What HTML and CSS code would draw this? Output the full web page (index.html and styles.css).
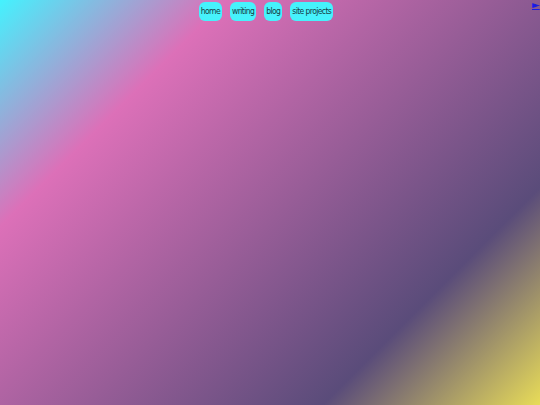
FILE: index.html
```html
<!DOCTYPE html>
<html>
<head>
<meta charset="utf-8">
<link rel="stylesheet" href="styles.css">
</head>
<body>
<div class="top">
  <nav class="nav">
    <a class="btn" href="#">home</a>
    <a class="btn" href="#">writing</a>
    <a class="btn" href="#">blog</a>
    <a class="btn" href="#">site projects</a>
  </nav>
  <a class="toggle" href="#">►</a>
</div>
</body>
</html>
```
FILE: styles.css
```css
html, body {
  margin: 0;
  height: 100%;
}
body {
  background: linear-gradient(135deg, #44f2fe 0%, #dc70b8 24%, #5a4c7a 77%, #e8dc58 100%);
  font-family: "DejaVu Sans Condensed", sans-serif;
}
.top {
  display: flex;
  align-items: flex-start;
}
.nav {
  flex: 1;
  display: flex;
  justify-content: center;
  gap: 8px;
  padding-top: 2px;
}
.btn {
  display: block;
  background: #46f2fc;
  color: #183c44;
  text-decoration: none;
  font-size: 8.5px;
  letter-spacing: -0.6px;
  line-height: 19px;
  padding: 0 2px;
  border-radius: 6px;
}
.toggle {
  color: #1a1ae6;
  font-size: 10px;
  line-height: 10px;
  width: 8px;
  overflow: hidden;
  text-decoration: underline;
  font-family: "DejaVu Sans", sans-serif;
}
```
